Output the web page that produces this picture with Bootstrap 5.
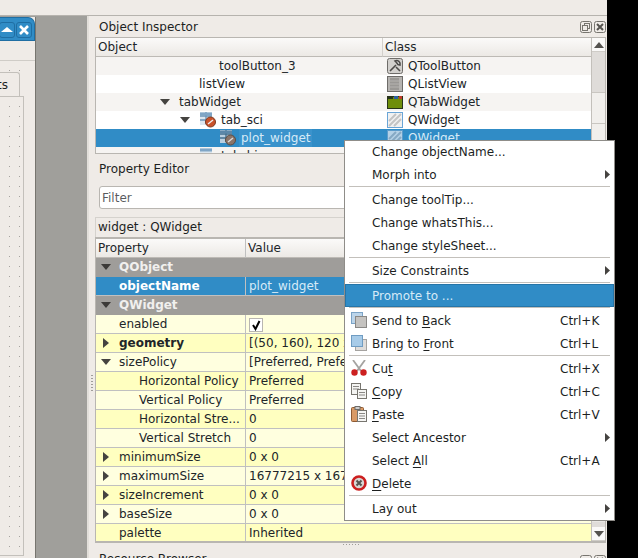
<!DOCTYPE html>
<html lang="en">
<head>
  <meta charset="UTF-8" />
  <title>Qt Designer</title>
  <link rel="stylesheet" href="https://cdn.jsdelivr.net/npm/bootstrap@5.3.2/dist/css/bootstrap.min.css" />
  <style>
    html, body { height: 558px; overflow: hidden; }
    body {
      background: #000;
      color: #1d1f1f;
      font: 12px/18px "DejaVu Sans", sans-serif;
      position: relative;
    }
    .app { width: 607px; height: 558px; background: #efebe7; overflow: hidden; }
    .topbar { height: 16px; border-bottom: 1px solid #b6b3ae; flex: none; }
    .main { height: 542px; }

    /* left: mdi area with clipped form window */
    .mdi { width: 89px; background: #a09f9b; border-right: 2px solid #e2dfda; padding-top: 1px; flex: none; }
    .formwin { width: 36px; height: 100%; background: #efebe7; border-right: 1px solid #77756f; overflow: hidden; }
    .wintitle {
      height: 24px; background: #308cc6; border: 1px solid #1f6ea3; border-left: 0;
      border-top-right-radius: 7px; padding: 4px 2px 0 0; gap: 1px;
    }
    .winbtn { width: 16px; height: 16px; border: 1px solid #1f6ea3; border-radius: 3px; flex: none; overflow: hidden; }
    .winbtn svg { display: block; }
    .menuline { height: 20px; border-bottom: 1px solid #cfccc7; }
    .canvas {
      height: 480px; width: 26px; padding-top: 11px;
      background-image:
        repeating-linear-gradient(90deg, #efebe7 0 9px, transparent 9px 10px),
        repeating-linear-gradient(#efebe7 0 9px, #a5a39f 9px 10px);
    }
    .tabhead {
      width: 20px; height: 24px; background: #efebe7; border: 1px solid #c3c0bb; border-left: 0; border-bottom: 0;
      border-top-right-radius: 3px; overflow: hidden; direction: rtl; padding-right: 11px; white-space: nowrap; line-height: 25px;
    }
    .tabframe {
      width: 24px; height: 460px; border: 1px solid #c3c0bb; border-left: 0;
      background-image:
        repeating-linear-gradient(90deg, #efebe7 0 9px, transparent 9px 10px),
        repeating-linear-gradient(#efebe7 0 9px, #a5a39f 9px 10px);
    }

    /* right docks */
    .docks { width: 518px; padding: 1px 1px 0 6px; position: relative; }
    .docktitle { height: 20px; padding-left: 4px; line-height: 20px; }
    .dockbtns { position: absolute; right: 1px; top: 5px; gap: 2px; }
    .vgrip { position: absolute; left: 2px; top: 359px; width: 2px; height: 16px; background-image: repeating-linear-gradient(#a09e9a 0 1px, transparent 1px 3px); }
    .hgrip { position: absolute; left: 254px; top: 528px; width: 18px; height: 1px; background-image: repeating-linear-gradient(90deg, #a09e9a 0 1px, transparent 1px 3px); }
    .panel { border: 1px solid #b9b6b1; background: #fff; overflow: hidden; }
    .treepanel { height: 117px; width: 511px; }
    .qtable { table-layout: fixed; width: 497px; margin: 0; border-collapse: separate; border-spacing: 0; }
    .qtable td, .qtable th {
      padding: 0; border: 0; background: transparent; color: inherit; box-shadow: none; white-space: nowrap; overflow: hidden;
      font-weight: normal; vertical-align: middle;
    }
    .treehead th { height: 18px; background: linear-gradient(#fbfaf9, #ece9e5); border-bottom: 1px solid #bdbab5; padding-left: 2px; }
    .treehead th:first-child { border-right: 1px solid #d3d0cb; }
    .treerow td { height: 18px; }
    .treerow.alt td { background: #f6f4f2; }
    .treerow.sel td { background: #308cc6; color: #d6eaf7; }
    .cellflex { display: flex; align-items: center; height: 18px; }
    .lv-a { padding-left: 123px; }
    .lv-b { padding-left: 103px; }
    .lv-c { padding-left: 60px; }
    .lv-d { padding-left: 80px; }
    .lv-e { padding-left: 123px; }
    .twist { width: 18px; flex: none; display: flex; justify-content: center; margin-right: 5px; }
    .twist svg { display: block; }
    .nodeicon { width: 18px; height: 16px; flex: none; margin-right: 4px; }
    .nodeicon.gap { margin-right: 2px; }
    .seltext { background: #3a93cc; padding: 0 2px; }
    .clsicon { width: 16px; height: 16px; flex: none; margin: 0 5px 0 4px; }
    .qscroll { position: absolute; right: 0; top: 0; bottom: 0; width: 14px; background: #f1efec; border-left: 1px solid #c3c0bb; }
    .treebox { position: relative; }
    .sb-btn { height: 14px; background: #faf9f8; display: flex; align-items: center; justify-content: center; border-bottom: 1px solid #cfccc7; }
    .sb-thumb { height: 41px; background: #dfdcd9; border-bottom: 1px solid #c9c6c1; }
    .sb-gap { height: 31px; background: #f1efec; border-bottom: 1px solid #c9c6c1; }
    .sb-rest { height: 5px; background: #dfdcd9; }
    .filterbox {
      height: 23px; width: 507px; margin: 6px 0 8px 4px; padding: 0 2px;
      border: 1px solid #b9b6b1; border-radius: 3px; font: inherit; color: #888; background: #fff;
      display: block; box-shadow: none;
    }
    .classbar { height: 20px; line-height: 19px; width: 511px; border: 1px solid #d5d2cd; border-bottom: 0; padding-left: 2px; }
    .docktitle.proptitle { height: 20px; margin-top: 6px; line-height: 18px; }
    .proppanel { width: 511px; height: 306px; position: relative; background: #ffffdc; border-width: 2px 1px 2px 1px; margin-top: 0; }
    .proptable { width: 497px; }
    .proptable td, .proptable th { height: 19px; border-bottom: 1px solid #c0c0c0; }
    .proptable td:first-child, .proptable th:first-child { border-right: 1px solid #c0c0c0; }
    .proptable th { background: linear-gradient(#fbfaf9, #ece9e5); padding-left: 2px; border-bottom-color: #bdbab5; }
    .proptable td + td { padding-left: 3px; }
    .proptable td.pname { padding-left: 23px; }
    .proptable td.pchild { padding-left: 43px; }
    .grp td { background: #9f9d9a; color: #f1f0ee; font-weight: bold; border-color: #9f9d9a; }
    .grp td:first-child { border-color: #9f9d9a; }
    .proptable .grp td { font-weight: bold; }
    .rowa td { background: #ffffc0; }
    .rowb td { background: #ffffdf; }
    .rowsel td { background: #308cc6; color: #d6eaf7; }
    .proptable .rowsel td:first-child { font-weight: bold; color: #fff; }
    .pflex { display: flex; align-items: center; height: 18px; }
    .pflex .twist { width: 19px; margin-right: 4px; }
    .chk { width: 14px; height: 14px; display: block; background: #fff; border: 1px solid #b9b6b1; margin: 1px 0 0 0; }
    .resbrowser { height: 18px; padding-left: 4px; line-height: 26px; margin-top: 3px; position: relative; }
    .resbtns { top: 9px; right: 0; }
    .btmscroll { display: flex; flex-direction: column; justify-content: flex-end; background: #e9e7e4; }

    /* context menu */
    .qmenu {
      position: absolute; left: 344px; top: 140px; width: 271px; display: block; margin: 0; padding: 0;
      background: #fff; border: 1px solid #8f8d89; border-radius: 0; font-size: 12px; color: #1d1f1f; min-width: 0;
    }
    .qmenu li { list-style: none; }
    .qmenu li:first-child { margin-top: -1px; }
    .qmenu .dropdown-item {
      height: 23px; padding: 0 0 0 27px; line-height: 22px; color: #1d1f1f; position: relative; display: flex;
      align-items: center; background: transparent;
    }
    .qmenu .dropdown-item.active { background: #308cc6; color: #d6eaf7; outline: 1px solid #2675a8; outline-offset: -1px; }
    .qmenu .dropdown-divider { margin: 0 4px 0 4px; height: 2px; border: 0; border-top: 1px solid #c3c0bb; opacity: 1; }
    .qmenu u { text-underline-offset: 2px; }
    .mshort { position: absolute; left: 215px; }
    .marrow { position: absolute; right: 4px; top: 7px; display: block; }
    .micon { position: absolute; left: 6px; top: 3px; display: block; }
  </style>
</head>
<body>
  <div class="app d-flex flex-column">
    <div class="topbar"></div>
    <div class="main d-flex">
      <div class="mdi">
        <div class="formwin">
          <div class="wintitle d-flex justify-content-end">
            <div class="winbtn">
              <svg width="14" height="14"><path d="M1 9 L7 4 L13 9 Z" fill="#fff"/></svg>
            </div>
            <div class="winbtn">
              <svg width="14" height="14"><path d="M3 3 L11 11 M11 3 L3 11" stroke="#fff" stroke-width="2.6"/></svg>
            </div>
          </div>
          <div class="menuline"></div>
          <div class="canvas">
            <div class="tabhead">ts</div>
            <div class="tabframe"></div>
          </div>
        </div>
      </div>

      <div class="docks">
        <div class="docktitle">Object Inspector</div>
        <div class="dockbtns d-flex">
          <svg width="12" height="12"><rect x="0.5" y="0.5" width="11" height="11" rx="2" fill="none" stroke="#77756f"/><rect x="4.5" y="2.5" width="5" height="5" fill="none" stroke="#77756f"/><rect x="2.5" y="4.5" width="5" height="5" fill="#efebe7" stroke="#77756f"/></svg>
          <svg width="12" height="12"><rect x="0.5" y="0.5" width="11" height="11" rx="2" fill="none" stroke="#77756f"/><path d="M3 3 L9 9 M9 3 L3 9" stroke="#55534f" stroke-width="2"/></svg>
        </div>
        <div class="vgrip"></div>
        <div class="hgrip"></div>

        <div class="panel treepanel treebox">
          <table class="table qtable">
            <colgroup><col style="width:287px"><col></colgroup>
            <thead class="treehead"><tr><th>Object</th><th>Class</th></tr></thead>
            <tbody>
              <tr class="treerow alt">
                <td><div class="cellflex lv-a">toolButton_3</div></td>
                <td><div class="cellflex">
                  <svg class="clsicon" viewBox="0 0 16 16"><rect x="0.5" y="0.5" width="15" height="15" rx="2" fill="#d2d0cd" stroke="#6e6c69"/><path d="M3 13 L9 7 M8 3 A3.5 3.5 0 0 1 13 7 L11 6.5 L9.5 4.5 Z M9 9 L13 13" stroke="#4c4a48" stroke-width="1.6" fill="#eee"/></svg>QToolButton</div></td>
              </tr>
              <tr class="treerow">
                <td><div class="cellflex lv-b">listView</div></td>
                <td><div class="cellflex">
                  <svg class="clsicon" viewBox="0 0 16 16"><rect x="0.5" y="0.5" width="15" height="15" fill="#b5b3b0" stroke="#6e6c69"/><rect x="3" y="2" width="9" height="12" fill="#9a9895"/><path d="M3 5 H12 M3 8 H12 M3 11 H12" stroke="#b5b3b0"/></svg>QListView</div></td>
              </tr>
              <tr class="treerow alt">
                <td><div class="cellflex lv-c"><span class="twist"><svg width="10" height="6"><path d="M0 0 H10 L5 6 Z" fill="#454340"/></svg></span>tabWidget</div></td>
                <td><div class="cellflex">
                  <svg class="clsicon" viewBox="0 0 16 16"><rect x="0.5" y="2.5" width="15" height="12" fill="#6f8e0a" stroke="#27331a"/><rect x="1" y="2" width="5" height="3" fill="#27331a"/><rect x="7" y="2" width="4" height="3" fill="#2c5fa0"/><rect x="12" y="2" width="3" height="3" fill="#c0392b"/></svg>QTabWidget</div></td>
              </tr>
              <tr class="treerow">
                <td><div class="cellflex lv-d"><span class="twist"><svg width="10" height="6"><path d="M0 0 H10 L5 6 Z" fill="#454340"/></svg></span>
                  <svg class="nodeicon" viewBox="0 0 18 16"><rect x="1" y="0" width="12" height="13" fill="#dce6ef"/><path d="M1 4 H13 M1 8 H13 M7 0 V12" stroke="#6b94b8" stroke-width="1.4"/><rect x="1" y="0.5" width="12" height="3" fill="#7fa5c6"/><circle cx="11.5" cy="10" r="5" fill="#c9522a" stroke="#7c3b22"/><path d="M9 12 L14 8" stroke="#eee" stroke-width="1.4"/></svg>tab_sci</div></td>
                <td><div class="cellflex">
                  <svg class="clsicon" viewBox="0 0 16 16"><rect x="0.5" y="0.5" width="15" height="15" fill="#f1f1f1" stroke="#6aa5d6"/><path d="M2 9 L9 2 M2 14 L14 2 M7 14 L14 7" stroke="#c4c4c4" stroke-width="2"/></svg>QWidget</div></td>
              </tr>
              <tr class="treerow sel">
                <td><div class="cellflex lv-e">
                  <svg class="nodeicon gap" viewBox="0 0 18 16"><rect x="1" y="0" width="12" height="13" fill="#b9cfe0"/><path d="M1 4 H13 M1 8 H13 M7 0 V12" stroke="#44708f" stroke-width="1.4"/><rect x="1" y="0.5" width="12" height="3" fill="#5b87a9"/><circle cx="11.5" cy="10" r="5" fill="#8b7468" stroke="#5a4c44"/><path d="M9 12 L14 8" stroke="#ddd" stroke-width="1.4"/></svg><span class="seltext">plot_widget</span></div></td>
                <td><div class="cellflex">
                  <svg class="clsicon" viewBox="0 0 16 16"><rect x="0.5" y="0.5" width="15" height="15" fill="#b5d1e6" stroke="#5c9ccb"/><path d="M2 9 L9 2 M2 14 L14 2 M7 14 L14 7" stroke="#86a9c4" stroke-width="2"/></svg>QWidget</div></td>
              </tr>
              <tr class="treerow alt">
                <td><div class="cellflex lv-d"><span class="twist"></span>
                  <svg class="nodeicon" viewBox="0 0 18 16"><rect x="1" y="0" width="12" height="13" fill="#dce6ef"/><rect x="1" y="0.5" width="12" height="3" fill="#7fa5c6"/></svg>tab_bio</div></td>
                <td></td>
              </tr>
            </tbody>
          </table>
          <div class="qscroll">
            <div class="sb-btn"><svg width="10" height="6"><path d="M0 6 H10 L5 0 Z" fill="#55534f"/></svg></div>
            <div class="sb-thumb"></div>
            <div class="sb-gap"></div>
            <div class="sb-gap"></div>
          </div>
        </div>

        <div class="proptitle docktitle">Property Editor</div>
        <input class="filterbox form-control" type="text" placeholder="Filter" />
        <div class="classbar">widget : QWidget</div>

        <div class="panel proppanel">
          <table class="table qtable proptable">
            <colgroup><col style="width:150px"><col></colgroup>
            <thead><tr><th>Property</th><th>Value</th></tr></thead>
            <tbody>
              <tr class="grp"><td><div class="pflex"><span class="twist"><svg width="10" height="6"><path d="M0 0 H10 L5 6 Z" fill="#3c3a38"/></svg></span>QObject</div></td><td></td></tr>
              <tr class="rowsel"><td class="pname">objectName</td><td>plot_widget</td></tr>
              <tr class="grp"><td><div class="pflex"><span class="twist"><svg width="10" height="6"><path d="M0 0 H10 L5 6 Z" fill="#3c3a38"/></svg></span>QWidget</div></td><td></td></tr>
              <tr class="rowb"><td class="pname">enabled</td><td><span class="chk"><svg width="12" height="12" class="d-block"><path d="M3 6 L5.5 10 L9.5 2" fill="none" stroke="#000" stroke-width="2"/></svg></span></td></tr>
              <tr class="rowa"><td><div class="pflex"><span class="twist"><svg width="6" height="10"><path d="M0 0 V10 L6 5 Z" fill="#454340"/></svg></span><b>geometry</b></div></td><td>[(50, 160), 120 x 80]</td></tr>
              <tr class="rowb"><td><div class="pflex"><span class="twist"><svg width="10" height="6"><path d="M0 0 H10 L5 6 Z" fill="#454340"/></svg></span>sizePolicy</div></td><td>[Preferred, Preferred, 0, 0]</td></tr>
              <tr class="rowa"><td class="pchild">Horizontal Policy</td><td>Preferred</td></tr>
              <tr class="rowb"><td class="pchild">Vertical Policy</td><td>Preferred</td></tr>
              <tr class="rowa"><td class="pchild">Horizontal Stre...</td><td>0</td></tr>
              <tr class="rowb"><td class="pchild">Vertical Stretch</td><td>0</td></tr>
              <tr class="rowa"><td><div class="pflex"><span class="twist"><svg width="6" height="10"><path d="M0 0 V10 L6 5 Z" fill="#454340"/></svg></span>minimumSize</div></td><td>0 x 0</td></tr>
              <tr class="rowb"><td><div class="pflex"><span class="twist"><svg width="6" height="10"><path d="M0 0 V10 L6 5 Z" fill="#454340"/></svg></span>maximumSize</div></td><td>16777215 x 16777215</td></tr>
              <tr class="rowa"><td><div class="pflex"><span class="twist"><svg width="6" height="10"><path d="M0 0 V10 L6 5 Z" fill="#454340"/></svg></span>sizeIncrement</div></td><td>0 x 0</td></tr>
              <tr class="rowb"><td><div class="pflex"><span class="twist"><svg width="6" height="10"><path d="M0 0 V10 L6 5 Z" fill="#454340"/></svg></span>baseSize</div></td><td>0 x 0</td></tr>
              <tr class="rowa"><td class="pname">palette</td><td>Inherited</td></tr>
            </tbody>
          </table>
          <div class="qscroll btmscroll">
            <div class="sb-rest"></div>
            <div class="sb-btn"><svg width="10" height="6"><path d="M0 0 H10 L5 6 Z" fill="#55534f"/></svg></div>
          </div>
        </div>
        <div class="resbrowser">Resource Browser
          <div class="dockbtns resbtns d-flex">
            <svg width="12" height="12"><rect x="0.5" y="0.5" width="11" height="11" rx="2" fill="none" stroke="#77756f"/></svg>
            <svg width="12" height="12"><rect x="0.5" y="0.5" width="11" height="11" rx="2" fill="none" stroke="#77756f"/><path d="M3 3 L9 9 M9 3 L3 9" stroke="#55534f" stroke-width="2"/></svg>
          </div>
        </div>
      </div>
    </div>
  </div>

  <ul class="dropdown-menu show qmenu">
    <li><a class="dropdown-item">Change objectName...</a></li>
    <li><a class="dropdown-item">Morph into<svg class="marrow" width="5" height="9"><path d="M0 0 V9 L5 4.5 Z" fill="#454340"/></svg></a></li>
    <li><hr class="dropdown-divider"></li>
    <li><a class="dropdown-item">Change toolTip...</a></li>
    <li><a class="dropdown-item">Change whatsThis...</a></li>
    <li><a class="dropdown-item">Change styleSheet...</a></li>
    <li><hr class="dropdown-divider"></li>
    <li><a class="dropdown-item">Size Constraints<svg class="marrow" width="5" height="9"><path d="M0 0 V9 L5 4.5 Z" fill="#454340"/></svg></a></li>
    <li><hr class="dropdown-divider"></li>
    <li><a class="dropdown-item active">Promote to ...</a></li>
    <li><hr class="dropdown-divider"></li>
    <li><a class="dropdown-item">
      <svg class="micon" width="16" height="16"><rect x="0.5" y="0.5" width="11" height="11" fill="#bcd5ea" stroke="#7ba3c6"/><rect x="4.5" y="4.5" width="11" height="11" fill="#c5c3c0" stroke="#8a8885"/></svg>
      <span>Send to <u>B</u>ack</span><span class="mshort">Ctrl+K</span></a></li>
    <li><a class="dropdown-item">
      <svg class="micon" width="16" height="16"><rect x="4.5" y="4.5" width="11" height="11" fill="#dedcda" stroke="#a5a3a0"/><rect x="0.5" y="0.5" width="11" height="11" fill="#a7cbe8" stroke="#6f9cc2"/></svg>
      <span>Bring to <u>F</u>ront</span><span class="mshort">Ctrl+L</span></a></li>
    <li><hr class="dropdown-divider"></li>
    <li><a class="dropdown-item">
      <svg class="micon" width="16" height="16"><path d="M2 0 L10 11 M14 0 L6 11" stroke="#a5a3a0" stroke-width="1.8"/><circle cx="3.5" cy="12.5" r="3.2" fill="#cc2020"/><circle cx="12.5" cy="12.5" r="3.2" fill="#cc2020"/></svg>
      <span>Cu<u>t</u></span><span class="mshort">Ctrl+X</span></a></li>
    <li><a class="dropdown-item">
      <svg class="micon" width="16" height="16"><rect x="0.5" y="0.5" width="9" height="11" fill="#f4f4f2" stroke="#77756f"/><path d="M2 3.5 H8 M2 6 H8" stroke="#8a8885"/><rect x="6.5" y="6.5" width="9" height="9" fill="#f4f4f2" stroke="#77756f"/><path d="M8 9.5 H14 M8 12 H14" stroke="#8a8885"/></svg>
      <span><u>C</u>opy</span><span class="mshort">Ctrl+C</span></a></li>
    <li><a class="dropdown-item">
      <svg class="micon" width="16" height="16"><rect x="0.5" y="1.5" width="12" height="14" rx="1" fill="#d99a66" stroke="#8d5a33"/><rect x="4" y="0.5" width="5" height="3" fill="#ccc" stroke="#6e6c69"/><rect x="6.5" y="4.5" width="9" height="11" fill="#f6f6f4" stroke="#77756f"/><path d="M8 7.5 H14 M8 10 H14 M8 12.5 H14" stroke="#8a8885"/></svg>
      <span><u>P</u>aste</span><span class="mshort">Ctrl+V</span></a></li>
    <li><a class="dropdown-item">Select Ancestor<svg class="marrow" width="5" height="9"><path d="M0 0 V9 L5 4.5 Z" fill="#454340"/></svg></a></li>
    <li><a class="dropdown-item"><span>Select <u>A</u>ll</span><span class="mshort">Ctrl+A</span></a></li>
    <li><a class="dropdown-item">
      <svg class="micon" width="16" height="16"><circle cx="8" cy="8" r="6.5" fill="#d8d6d3" stroke="#cc1f1f" stroke-width="2.6"/><path d="M5.5 5.5 L10.5 10.5 M10.5 5.5 L5.5 10.5" stroke="#55534f" stroke-width="2"/></svg>
      <span><u>D</u>elete</span></a></li>
    <li><hr class="dropdown-divider"></li>
    <li><a class="dropdown-item">Lay out<svg class="marrow" width="5" height="9"><path d="M0 0 V9 L5 4.5 Z" fill="#454340"/></svg></a></li>
  </ul>

  <script src="https://cdn.jsdelivr.net/npm/bootstrap@5.3.2/dist/js/bootstrap.bundle.min.js"></script>
</body>
</html>
